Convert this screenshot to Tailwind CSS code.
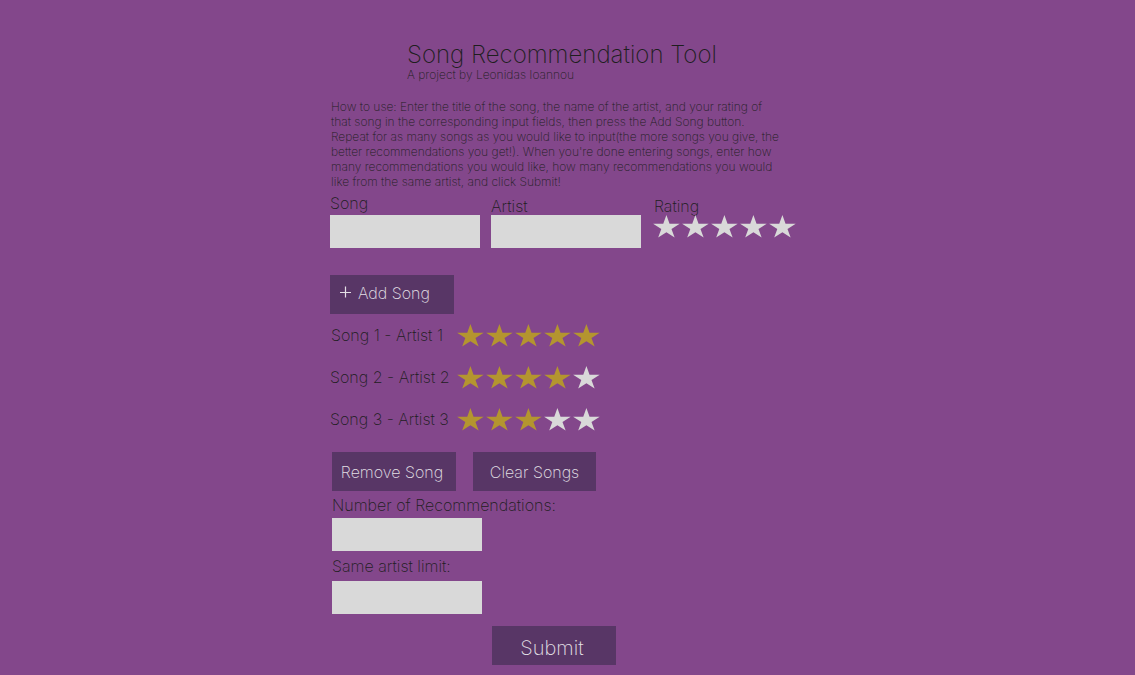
<!DOCTYPE html>
<html lang="en">
<head>
<meta charset="utf-8">
<meta name="viewport" content="width=device-width, initial-scale=1">
<title>Song Recommendation Tool</title>
<script src="https://cdn.jsdelivr.net/npm/@tailwindcss/browser@4"></script>
</head>
<body class="min-h-screen bg-[#83478b] font-['Inter',sans-serif] font-extralight text-[#1e1e1e] antialiased">
<svg class="hidden" aria-hidden="true">
  <symbol id="star" viewBox="0 0 28 25">
    <path fill="currentColor" d="M14.4 0L17.54 8.64H27.71L19.49 13.98L22.63 22.61L14.4 17.28L6.17 22.61L9.31 13.98L1.09 8.64H11.26Z"/>
  </symbol>
</svg>
<main class="mx-auto max-w-[475px] pt-[42px] pb-2">
  <header class="pl-[77px]">
    <h1 class="pt-px text-2xl leading-6">Song Recommendation Tool</h1>
    <p class="text-xs leading-[15px]">A project by Leonidas Ioannou</p>
  </header>
  <p class="mt-[17px] pl-px text-xs leading-[15px]">How to use: Enter the title of the song, the name of the artist, and your rating of<br>
    that song in the corresponding input fields, then press the Add Song button.<br>
    Repeat for as many songs as you would like to input(the more songs you give, the<br>
    better recommendations you get!). When you're done entering songs, enter how<br>
    many recommendations you would like, how many recommendations you would<br>
    like from the same artist, and click Submit!</p>

  <form>
    <div class="mt-[5px] flex flex-wrap gap-[11px]">
      <div class="flex w-[150px] flex-col">
        <label for="song" class="pb-0.5 leading-[19px]">Song</label>
        <input id="song" type="text" class="h-[33px] bg-[#d9d9d9] px-2 outline-none">
      </div>
      <div class="flex w-[150px] flex-col">
        <label for="artist" class="pt-1 leading-[17px]">Artist</label>
        <input id="artist" type="text" class="h-[33px] bg-[#d9d9d9] px-2 outline-none">
      </div>
      <fieldset>
        <legend class="pt-1 pl-0.5 leading-[17px]">Rating</legend>
        <div class="flex gap-px text-[#d9d9d9]">
          <label><input type="radio" name="rating" value="1" aria-label="1 star" class="sr-only"><svg class="h-[25px] w-7"><use href="#star"/></svg></label>
          <label><input type="radio" name="rating" value="2" aria-label="2 stars" class="sr-only"><svg class="h-[25px] w-7"><use href="#star"/></svg></label>
          <label><input type="radio" name="rating" value="3" aria-label="3 stars" class="sr-only"><svg class="h-[25px] w-7"><use href="#star"/></svg></label>
          <label><input type="radio" name="rating" value="4" aria-label="4 stars" class="sr-only"><svg class="h-[25px] w-7"><use href="#star"/></svg></label>
          <label><input type="radio" name="rating" value="5" aria-label="5 stars" class="sr-only"><svg class="h-[25px] w-7"><use href="#star"/></svg></label>
        </div>
      </fieldset>
    </div>

    <button type="button" class="mt-[27px] flex h-[39px] w-[124px] items-center gap-1.5 bg-[#583666] pb-1 pl-2.5 text-[#e4e0e6]">
      <svg class="mb-0.5 h-3 w-3" viewBox="0 0 12 12" fill="none" stroke="currentColor" stroke-width="1.2"><path d="M5.5 .5V11.5M0 6.5H11"/></svg>
      Add Song
    </button>

    <ul class="mt-2.5 flex flex-col gap-[17px]">
      <li class="flex h-[25px]">
        <span class="w-[126px] pl-px leading-[23px] whitespace-nowrap">Song 1 - Artist 1</span>
        <span class="flex gap-px text-[#b4952f]" role="img" aria-label="5 out of 5 stars">
          <svg class="h-[25px] w-7"><use href="#star"/></svg>
          <svg class="h-[25px] w-7"><use href="#star"/></svg>
          <svg class="h-[25px] w-7"><use href="#star"/></svg>
          <svg class="h-[25px] w-7"><use href="#star"/></svg>
          <svg class="h-[25px] w-7"><use href="#star"/></svg>
        </span>
      </li>
      <li class="flex h-[25px]">
        <span class="w-[126px] leading-[23px] whitespace-nowrap">Song 2 - Artist 2</span>
        <span class="flex gap-px text-[#b4952f]" role="img" aria-label="4 out of 5 stars">
          <svg class="h-[25px] w-7"><use href="#star"/></svg>
          <svg class="h-[25px] w-7"><use href="#star"/></svg>
          <svg class="h-[25px] w-7"><use href="#star"/></svg>
          <svg class="h-[25px] w-7"><use href="#star"/></svg>
          <svg class="h-[25px] w-7 text-[#d9d9d9]"><use href="#star"/></svg>
        </span>
      </li>
      <li class="flex h-[25px]">
        <span class="w-[126px] leading-[23px] whitespace-nowrap">Song 3 - Artist 3</span>
        <span class="flex gap-px text-[#b4952f]" role="img" aria-label="3 out of 5 stars">
          <svg class="h-[25px] w-7"><use href="#star"/></svg>
          <svg class="h-[25px] w-7"><use href="#star"/></svg>
          <svg class="h-[25px] w-7"><use href="#star"/></svg>
          <svg class="h-[25px] w-7 text-[#d9d9d9]"><use href="#star"/></svg>
          <svg class="h-[25px] w-7 text-[#d9d9d9]"><use href="#star"/></svg>
        </span>
      </li>
    </ul>

    <div class="mt-[19px] flex flex-col pl-0.5">
      <div class="flex gap-[17px] text-[#e4e0e6]">
        <button type="button" class="h-[39px] w-[124px] bg-[#583666] pr-1">Remove Song</button>
        <button type="button" class="h-[39px] w-[123px] bg-[#583666]">Clear Songs</button>
      </div>
      <label for="count" class="mt-[5px] leading-[19px]">Number of Recommendations:</label>
      <input id="count" type="text" inputmode="numeric" class="mt-[3px] h-[33px] w-[150px] bg-[#d9d9d9] px-2 outline-none">
      <label for="limit" class="mt-1.5 leading-[19px]">Same artist limit:</label>
      <input id="limit" type="text" inputmode="numeric" class="mt-[5px] h-[33px] w-[150px] bg-[#d9d9d9] px-2 outline-none">
      <button type="submit" class="mt-3 ml-40 h-[39px] w-[124px] bg-[#583666] pt-1 pr-1 text-xl text-[#e4e0e6]">Submit</button>
    </div>
  </form>
</main>
</body>
</html>
